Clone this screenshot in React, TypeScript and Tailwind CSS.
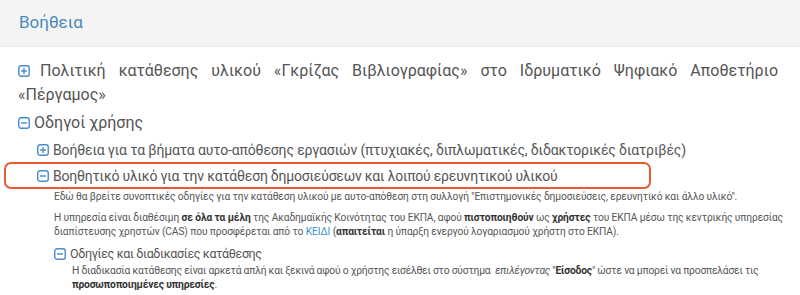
import React from "react";

const SquareIcon = ({ open, size = 12 }: { open: boolean; size?: number }) => (
  <svg width={size} height={size} viewBox="0 0 12 12" className="shrink-0">
    <rect x="0.75" y="0.75" width="10.5" height="10.5" rx="2.2" fill="none" stroke="#4a8ccc" strokeWidth="1.4" />
    <line x1="3" y1="6" x2="9" y2="6" stroke="#4a8ccc" strokeWidth="1.4" />
    {!open && <line x1="6" y1="3" x2="6" y2="9" stroke="#4a8ccc" strokeWidth="1.4" />}
  </svg>
);

export default function App() {
  return (
    <div className="w-[800px] h-[295px] overflow-hidden bg-white text-[#555] font-['Roboto',sans-serif]">
      {/* Header */}
      <div className="h-[47px] bg-[#f4f4f4] border-b border-[#e8e8e8] flex items-center pl-[19px]">
        <h1 className="text-[17px] text-[#4a8abd] -mt-[1px]">Βοήθεια</h1>
      </div>

      <div className="pl-[18px] pr-[22px] pt-[12px]">
        {/* Item 1 */}
        <p className="text-[16px] leading-[24px] text-justify [text-align-last:left]">
          <span className="inline-flex align-[-1px] mr-[10px]">
            <SquareIcon open={false} />
          </span>
          Πολιτική κατάθεσης υλικού «Γκρίζας Βιβλιογραφίας» στο Ιδρυματικό Ψηφιακό Αποθετήριο «Πέργαμος»
        </p>

        {/* Item 2 */}
        <div className="mt-[4px] flex items-center gap-[4px] text-[16px] leading-[24px]">
          <SquareIcon open />
          <span>Οδηγοί χρήσης</span>
        </div>

        <div className="pl-[19px] mt-[3px]">
          <div className="flex items-center gap-[4px] text-[14px] leading-[24px] tracking-[-0.01em]">
            <SquareIcon open={false} />
            <span>Βοήθεια για τα βήματα αυτο-απόθεσης εργασιών (πτυχιακές, διπλωματικές, διδακτορικές διατριβές)</span>
          </div>

          {/* highlighted item */}
          <div className="relative mt-[1px]">
            <div className="absolute -left-[33px] -top-[1px] w-[647px] h-[27px] border-2 border-[#ec5a35] rounded-[7px]" />
            <div className="flex items-center gap-[4px] text-[14px] leading-[24px] pt-[1px] tracking-[-0.015em]">
              <SquareIcon open />
              <span>Βοηθητικό υλικό για την κατάθεση δημοσιεύσεων και λοιπού ερευνητικού υλικού</span>
            </div>
          </div>

          <div className="pl-[17px] text-[10.2px] leading-[14px] mt-[2px] tracking-[-0.01em]">
            <p className="whitespace-nowrap">
              Εδώ θα βρείτε συνοπτικές οδηγίες για την κατάθεση υλικού με αυτο-απόθεση στη συλλογή "Επιστημονικές δημοσιεύσεις, ερευνητικό και άλλο υλικό".
            </p>
            <p className="mt-[7px] whitespace-nowrap">
              Η υπηρεσία είναι διαθέσιμη <b className="text-[#333]">σε όλα τα μέλη</b> της Ακαδημαϊκής Κοινότητας του ΕΚΠΑ, αφού{" "}
              <b className="text-[#333]">πιστοποιηθούν</b> ως <b className="text-[#333]">χρήστες</b> του ΕΚΠΑ μέσω της κεντρικής υπηρεσίας
              <br />
              διαπίστευσης χρηστών (CAS) που προσφέρεται από το <span className="text-[#3b8fd0]">ΚΕΙΔΙ</span> (
              <b className="text-[#333]">απαιτείται</b> η ύπαρξη ενεργού λογαριασμού χρήστη στο ΕΚΠΑ).
            </p>

            <div className="mt-[5px] flex items-center gap-[4px] text-[12.5px] leading-[20px] tracking-[-0.03em]">
              <SquareIcon open />
              <span>Οδηγίες και διαδικασίες κατάθεσης</span>
            </div>
            <p className="pl-[18px] text-[10.3px] leading-[14px] tracking-[-0.02em] whitespace-nowrap">
              Η διαδικασία κατάθεσης είναι αρκετά απλή και ξεκινά αφού ο χρήστης εισέλθει στο σύστημα&nbsp; <i>επιλέγοντας</i> "
              <b className="text-[#333]">Είσοδος</b>" ώστε να μπορεί να προσπελάσει τις
              <br />
              <b className="text-[#333]">προσωποποιημένες υπηρεσίες</b>.
            </p>
          </div>
        </div>
      </div>
    </div>
  );
}
